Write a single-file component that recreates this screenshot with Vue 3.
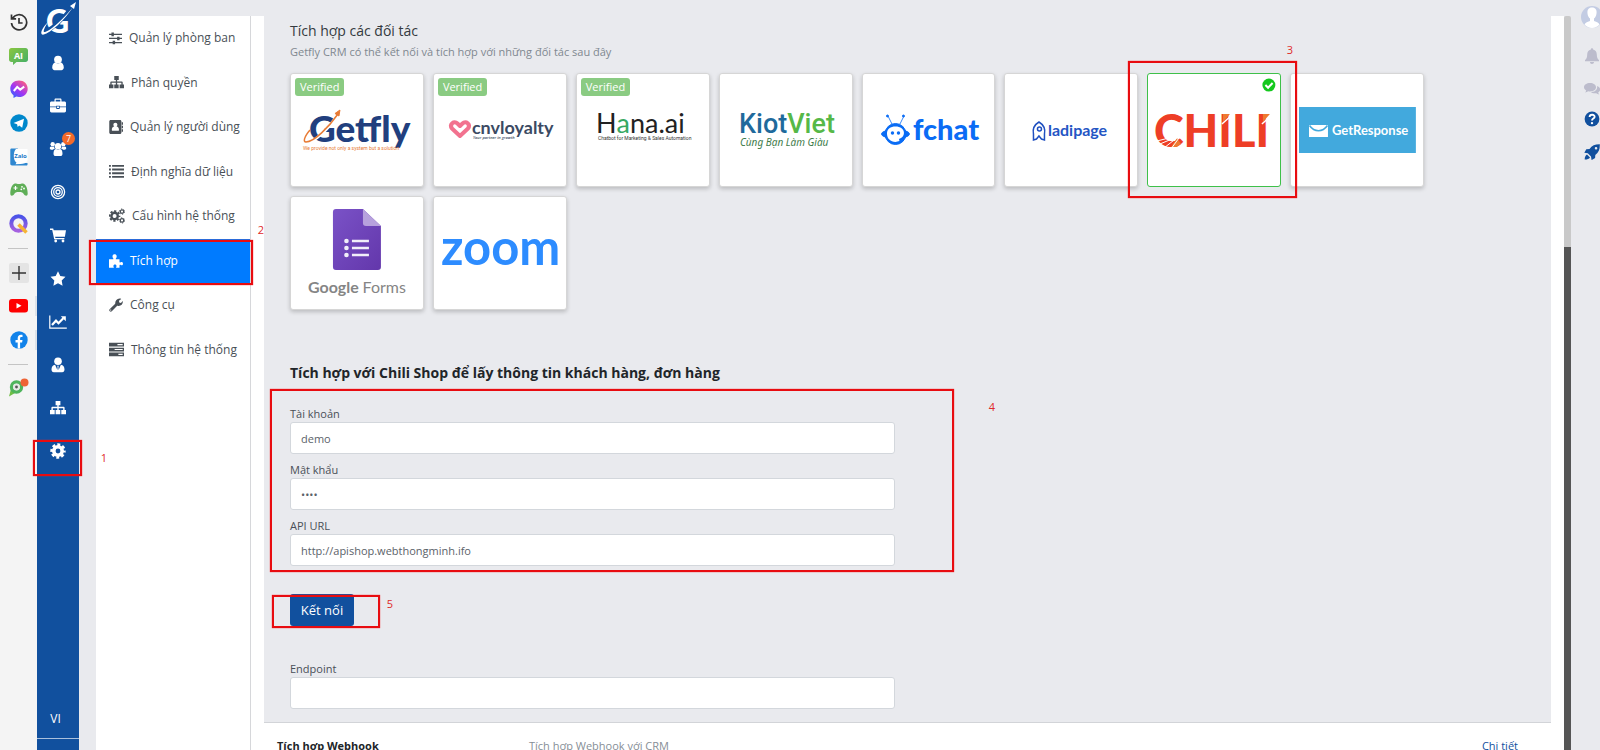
<script setup>
import { ref } from 'vue'

const icons = {
  user: '<circle cx="8" cy="4.6" r="3.9"/><path d="M2.2 12.6c0-3 1.4-5 3.4-5 .7.7 1.500 1 2.400 1s1.700-.3 2.400-1c2 0 3.400 2 3.400 5 0 1.500-1 2.600-2.400 2.600H4.600c-1.400 0-2.400-1.100-2.400-2.600z"/>',
  briefcase: '<path fill-rule="evenodd" d="M4.500 3.500V1.700C4.500 1 5 .5 5.700.5h4.600c.7 0 1.200.5 1.200 1.200v1.800h3c.8 0 1.500.6 1.500 1.400v3.600H9.800V7.800H6.200v.7H0V4.900c0-.8.7-1.400 1.500-1.400zm1.200 0h4.600V1.700H5.700zM0 9.300h6.200v1c0 .4.300.7.700.7h2.200c.4 0 .7-.3.700-.7v-1H16V13c0 .8-.7 1.400-1.500 1.400h-13C.7 14.400 0 13.800 0 13zm7-.7h2v1.500H7z"/>',
  group: '<circle cx="8" cy="5.200" r="3.200"/><circle cx="2.700" cy="3.200" r="2.200"/><circle cx="13.300" cy="3.200" r="2.200"/><path d="M3.500 12.700c0-2.600 1-4.700 2.700-4.700.5.500 1.100.7 1.800.7s1.300-.2 1.800-.7c1.700 0 2.700 2.100 2.700 4.700 0 1.500-.9 2.300-2.100 2.300H5.600c-1.200 0-2.100-.8-2.100-2.300zM1.300 5.600c.9.500 1.800.5 2.700 0 .1.900.4 1.600.9 2.200-.9 0-1.500.4-2 .9H1.300C.4 8.700-.2 8.200-.2 7.300c0-.8.5-1.600 1.500-1.700zM14.700 5.600c-.9.500-1.800.5-2.700 0-.1.900-.4 1.600-.9 2.200.9 0 1.500.4 2 .9h1.600c.9 0 1.500-.5 1.500-1.400 0-.8-.5-1.600-1.500-1.700z"/>',
  target: '<g fill="none" stroke="currentColor" stroke-width="1.300"><circle cx="8" cy="8" r="6.600"/><circle cx="8" cy="8" r="4.300"/><circle cx="8" cy="8" r="2"/></g>',
  cart: '<path d="M0 1.500h3.200l.5 1.700H16l-1.100 6.600H5.100l.3 1.200h9v1.300H4.200L2.200 2.900H0z"/><circle cx="5.700" cy="14" r="1.400"/><circle cx="13" cy="14" r="1.400"/>',
  star: '<path d="M8 .3l2.300 4.800 5.200.7-3.800 3.700.9 5.200L8 12.200l-4.600 2.500.9-5.200L.5 5.800l5.200-.7z"/>',
  chart: '<path d="M-.8 1.500H.4v12h16.400v1.200H-.8z"/><path d="M2 11l4-4.300 2.500 2.500 4.800-4.900" fill="none" stroke="currentColor" stroke-width="2.200"/><path d="M10.800 2.200h5v5z"/>',
  tie: '<circle cx="8" cy="4.200" r="3.800"/><path fill-rule="evenodd" d="M1.500 12.600c0-2.800 1.200-4.600 3.600-4.800L7.400 13l.2-3.300L7 8.700h2l-.6 1 .2 3.300 2.300-5.200c2.400.2 3.600 2 3.600 4.800 0 1.600-.8 2.600-2.300 2.600H3.800c-1.500 0-2.300-1-2.300-2.600z"/>',
  sitemap: '<path d="M5.600 1h4.800v4.200H8.700v1.600h5c.5 0 .9.400.9.900v2.300H16v4.200h-4.700V10h1.900V8.200H8.700V10h1.600v4.200H5.600V10h1.700V8.200H2.800V10h1.900v4.200H0V10h1.400V7.700c0-.5.400-.9.900-.9h5V5.200H5.600z"/>',
  gear: '<g fill="none" stroke="currentColor"><circle cx="8" cy="8" r="4.200" stroke-width="3.600"/><circle cx="8" cy="8" r="6.400" stroke-width="2.600" stroke-dasharray="2.900 2.126" stroke-dashoffset="1.450"/></g>',
  sliders: '<path d="M0 2.200h16v1.500H0zM0 7.200h16v1.500H0zM0 12.200h16v1.500H0z"/><path d="M3 .7h3v4.500H3zM10 5.700h3v4.500h-3zM4.500 10.700h3v4.500h-3z"/>',
  book: '<path fill-rule="evenodd" d="M2 0h10.500c1 0 1.700.7 1.700 1.700v12.600c0 1-.7 1.700-1.700 1.700H2C1 16 .3 15.300.3 14.300V1.700C.3.700 1 0 2 0zm5.300 3C5.900 3 5 4 5 5.300c0 .9.400 1.600 1 2.100-1.700.2-2.800 1.500-2.800 4 0 .6.4 1 1 1h6.200c.6 0 1-.4 1-1 0-2.500-1.100-3.800-2.800-4 .6-.5 1-1.200 1-2.100C9.600 4 8.700 3 7.300 3z"/><path d="M14.500 2.500H16v3h-1.500zM14.500 6.500H16v3h-1.500zM14.500 10.500H16v3h-1.500z"/>',
  list: '<path d="M0 1h2v2H0zM3.300 1H16v2H3.300zM0 4.900h2v2H0zM3.300 4.900H16v2H3.300zM0 8.800h2v2H0zM3.300 8.800H16v2H3.300zM0 12.700h2v2H0zM3.300 12.700H16v2H3.300z"/>',
  cogs: '<g fill="none" stroke="currentColor"><circle cx="5.600" cy="8" r="3.200" stroke-width="2.400"/><circle cx="5.600" cy="8" r="4.900" stroke-width="1.800" stroke-dasharray="2.200 1.648" stroke-dashoffset="1.100"/><circle cx="13" cy="3.600" r="1.700" stroke-width="1.200"/><circle cx="13" cy="3.600" r="2.600" stroke-width="1" stroke-dasharray="1.300 1.423"/><circle cx="13" cy="12.400" r="1.700" stroke-width="1.200"/><circle cx="13" cy="12.400" r="2.600" stroke-width="1" stroke-dasharray="1.300 1.423"/></g>',
  puzzle: '<path d="M0 6h4.700c.5 0 .5-.5.200-1C4.300 4.300 4 3.600 4 2.800 4 1.300 5 .3 6.400.3s2.400 1 2.400 2.500c0 .8-.3 1.500-.9 2.200-.3.500-.2 1 .3 1H12v3.200c0 .5.500.7 1 .4.400-.3.800-.5 1.300-.5 1 0 1.700.8 1.700 1.900s-.7 1.900-1.700 1.900c-.5 0-.9-.2-1.300-.5-.5-.3-1-.1-1 .4v2.900H8.600c-.5 0-.7-.4-.4-.8.3-.4.400-.8.400-1.200 0-1-.8-1.700-1.800-1.700s-1.800.7-1.800 1.700c0 .4.100.8.400 1.200.3.400.1.800-.4.800H0z"/>',
  wrench: '<path fill-rule="evenodd" d="M.7 12.800l6.400-6.300C6.800 3.300 8.900.5 12 .5c.8 0 1.500.2 2 .5l-2.600 2.100.3 2 1.900.5L15.800 3.500c.5 2.900-1.900 5.800-5.200 5.500-.4 0-.8-.1-1.200-.2l-6.200 6.400c-.7.600-1.600.6-2.300 0-.8-.7-.8-1.700-.2-2.400zm1.500.3a.7.7 0 1 0 .1 1.300.7.7 0 0 0-.1-1.300z"/>',
  server: '<path fill-rule="evenodd" d="M0 .8h16v4H0zm9 1.400v1.200h5.600V2.200zM0 6h16v4H0zm6 1.400v1.200h8.600V7.400zM0 11.200h16v4H0zm10 1.400v1.200h4.600v-1.200z"/>',
  bell: '<path d="M8 .3c.7 0 1.100.5 1.100 1.200 2.500.5 3.700 2.400 3.700 5 0 3 .8 4.600 2.200 5.500v1.300H1V12c1.400-.9 2.200-2.500 2.200-5.500 0-2.600 1.200-4.500 3.700-5C6.900.8 7.300.3 8 .3zM6 14h4c0 1.200-.8 2-2 2s-2-.8-2-2z"/>',
  comments: '<path d="M6 2c3.400 0 6 1.800 6 4.200s-2.600 4.200-6 4.200c-.6 0-1.200-.1-1.800-.2-.9.700-1.900 1.100-3.100 1.200.6-.6 1-1.200 1.100-2C.8 8.600 0 7.500 0 6.200 0 3.800 2.600 2 6 2z"/><path d="M13.100 5c1.800.6 3.100 1.900 3.100 3.500 0 1.200-.8 2.300-2 3 .1.700.5 1.300 1.100 1.900-1.200-.1-2.200-.5-3.100-1.200-2 .4-4.200 0-5.500-1.100 3.900 0 7-2.200 6.400-6.100z"/>',
  rocket: '<path fill-rule="evenodd" d="M15.800.3c.2 4.600-.9 8.100-4.500 10.600l-.2 3.200-3.500 2L7 12.500 3.800 9.300.3 8.700l2-3.500 3.200-.3C8 1.500 11.200.2 15.800.3zM12 3a1.300 1.300 0 1 0 .1 2.600A1.300 1.300 0 0 0 12 3zM3 10.500l3 3C5 15 3 15.700.7 15.600.6 13.300 1.400 11.500 3 10.500z"/>'
}

const modules = ['user', 'briefcase', 'group', 'target', 'cart', 'star', 'chart', 'tie', 'sitemap', 'gear']
const menu = [
  { icon: 'sliders', size: 13, text: 'Quản lý phòng ban' },
  { icon: 'sitemap', size: 15, text: 'Phân quyền' },
  { icon: 'book', size: 14, text: 'Quản lý người dùng' },
  { icon: 'list', size: 15, text: 'Định nghĩa dữ liệu' },
  { icon: 'cogs', size: 16, text: 'Cấu hình hệ thống' },
  { icon: 'puzzle', size: 14, text: 'Tích hợp', active: true },
  { icon: 'wrench', size: 14, text: 'Công cụ' },
  { icon: 'server', size: 15, text: 'Thông tin hệ thống' }
]
const account = ref('demo')
const password = ref('demo')
const apiUrl = ref('http://apishop.webthongminh.ifo')
const endpoint = ref('')
</script>

<template>
  <div class="shell">
    <nav class="rail" aria-label="Apps">
      <div class="apps">
        <a href="#" aria-label="History"><svg width="18" height="18" viewBox="0 0 18 18" fill="none" stroke="#333" stroke-width="1.700"><path d="M2.500 5.500A7.600 7.600 0 1 1 1.500 10M1.500 1.500v4.300h4.600M9 5v5h3.600"/></svg></a>
        <a href="#" aria-label="AI"><svg width="19" height="19" viewBox="0 -2 19 19"><defs><linearGradient id="ai" x2="1" y2="1"><stop stop-color="#8cc63f"/><stop offset="1" stop-color="#3fae6b"/></linearGradient></defs><path d="M2.500 0h14C18 0 19 1 19 2.500v9c0 1.500-1 2.500-2.500 2.500H7.500L4 17v-3H2.500C1 14 0 13 0 11.500v-9C0 1 1 0 2.500 0z" fill="url(#ai)"/><text x="9.500" y="10.500" text-anchor="middle" font-size="9" font-weight="700" fill="#fff">AI</text></svg></a>
        <a href="#" aria-label="Messenger"><svg width="18" height="18" viewBox="0 0 18 18"><defs><linearGradient id="ms" x1="0" y1="1" x2=".8" y2="0"><stop stop-color="#1a6dff"/><stop offset=".5" stop-color="#a035f5"/><stop offset="1" stop-color="#ff5f7d"/></linearGradient></defs><path d="M9 .5c5 0 8.700 3.500 8.700 8.200S14 17 9 17c-1 0-1.900-.1-2.700-.4L3.500 18v-2.700C1.500 13.700.3 11.500.3 8.700.3 4 4 .5 9 .5z" fill="url(#ms)"/><path d="M3.800 11l3.400-4 3 2.600 4-3" fill="none" stroke="#fff" stroke-width="2"/></svg></a>
        <a href="#" aria-label="Telegram"><svg width="18" height="18" viewBox="0 0 18 18"><circle cx="9" cy="9" r="8.700" fill="#0088cc"/><path d="M3.500 9L14 4.700l-1.800 9-3-2.200-1.500 1.600-.6-2.800z" fill="#fff"/></svg></a>
        <a href="#" aria-label="Zalo"><svg width="18" height="18" viewBox="0 0 18 18"><path d="M1.500.5H8L5 4v8l3 3h9.500v1.500c0 .6-.4 1-1 1H2c-1 0-1.700-.7-1.700-1.700V2C.3 1 .7.500 1.500.5z" fill="#2f87d0"/><path d="M6 1h11.500v11.500c-1 2.500-4 3.500-7 3.500l-5 .2 1-1.800C3 12.500 3 4 6 1z" fill="#fff"/><text x="10.500" y="10" text-anchor="middle" font-size="6" font-weight="700" fill="#1d78c8">Zalo</text></svg></a>
        <a href="#" aria-label="Games"><svg width="18" height="14" viewBox="0 0 18 14"><path d="M4 1c1.500-1.200 2.500 0 5 0s3.500-1.200 5 0c2.500 1 3.700 6 3.700 9.500 0 3-2.700 2.500-4 .5C12.800 9.500 12 9 9 9s-3.800.5-4.700 2C3 13 .3 13.500.3 10.500.3 7 1.500 2 4 1z" fill="#5fae57"/><path d="M5.500 3v4M3.500 5h4" stroke="#fff" stroke-width="1.200"/><circle cx="12" cy="3.800" r=".9" fill="#fff"/><circle cx="14" cy="5.500" r=".9" fill="#fff"/><circle cx="11.300" cy="6.300" r=".9" fill="#fff"/></svg></a>
        <a href="#" aria-label="Search"><svg width="20" height="20" viewBox="0 0 20 20" fill="none"><defs><linearGradient id="qq" x1="1" y2="1"><stop stop-color="#4a53e8"/><stop offset="1" stop-color="#a561e0"/></linearGradient></defs><circle cx="9.500" cy="9.500" r="7.200" stroke="url(#qq)" stroke-width="4"/><path d="M9.500 10.500l8 8" stroke="#f5b335" stroke-width="3.600"/></svg></a>
      </div>
      <hr>
      <div class="apps pinned">
        <button class="add" type="button" aria-label="Add"><svg width="14" height="14" viewBox="0 0 14 14" stroke="#333" stroke-width="1.400"><path d="M7 0v14M0 7h14"/></svg></button>
        <a href="#" class="tab" aria-label="YouTube"><svg width="19" height="14" viewBox="0 0 19 14"><rect width="19" height="13.500" rx="3" fill="#fe0000"/><path d="M7.500 4v5.500l5-2.700z" fill="#fff"/></svg></a>
        <a href="#" class="tab" aria-label="Facebook"><svg width="18" height="18" viewBox="0 0 18 18"><circle cx="9" cy="9" r="8.700" fill="#1283ea"/><path d="M7.700 17.600v-6H5.500V9.100h2.200V7.200C7.700 5 9 3.800 11 3.800c.8 0 1.500.1 1.500.1V6h-1.100c-1 0-1.300.6-1.300 1.300v1.800h2.400l-.4 2.500h-2v6z" fill="#fff"/></svg></a>
      </div>
      <hr>
      <a href="#" class="last" aria-label="Lead"><svg width="20" height="19" viewBox="0 0 20 19"><path d="M0 18.500L2 11l4 4z" fill="#6fbe45"/><circle cx="7.500" cy="9" r="5" fill="none" stroke="#4eb45c" stroke-width="3.400"/><circle cx="7.500" cy="9" r="3.400" fill="#e5e9e5"/><circle cx="7.500" cy="9" r="1.400" fill="#555"/><circle cx="15.500" cy="4.500" r="4" fill="#ee6334"/></svg></a>
    </nav>

    <nav class="bar" aria-label="Modules">
      <a href="#" class="brand" aria-label="Home"><svg width="42" height="40" viewBox="0 0 42 40"><text x="9" y="33" class="lato" font-size="32" font-weight="900" fill="#fff">G</text><path d="M35 7C27 18 16 28 8 32" fill="none" stroke="#11509e" stroke-width="4"/><path d="M11 22c-6 6-8 11-6 12.500C9 36 25 24 36 7 24 22 10 33 7 32c-1-1 1-5 4-10z" fill="#fff"/><path d="M39 2l-6 4 4 3z" fill="#fff"/></svg></a>
      <div class="modules">
        <a v-for="m in modules" :key="m" href="#" :aria-label="m">
          <svg width="16" height="16" viewBox="0 0 16 16" fill="currentColor" overflow="visible" v-html="icons[m]"></svg>
          <span v-if="m === 'group'" class="count">7</span>
          <span v-if="m === 'gear'" class="mark mark-gear"><b>1</b></span>
        </a>
      </div>
      <button type="button" class="lang">VI</button>
    </nav>

    <nav class="side" aria-label="Settings">
      <div class="menu">
        <a v-for="i in menu" :key="i.text" href="#" :class="{ active: i.active }">
          <svg :width="i.size" :height="i.size" viewBox="0 0 16 16" fill="currentColor" v-html="icons[i.icon]"></svg>
          <span>{{ i.text }}</span>
          <span v-if="i.active" class="mark mark-menu"><b>2</b></span>
        </a>
      </div>
    </nav>

    <main>
      <section class="panel">
        <h1>Tích hợp các đối tác</h1>
        <p class="sub">Getfly CRM có thể kết nối và tích hợp với những đối tác sau đây</p>
        <div class="cards">
          <a href="#" class="card"><span class="tag">Verified</span>
            <svg viewBox="1 1 132 112"><text x="19" y="69" class="lato" font-size="37" font-weight="900" fill="#213f7e">Getfly</text><path d="M18 60c-5 6-5 10-2 10 8 0 22-14 32-28" fill="none" stroke="#fff" stroke-width="3"/><path d="M20 57c-6 7-7 12-4 12C24 69 39 54 48 41" fill="none" stroke="#e87c36" stroke-width="1.500"/><path d="M50 37l-5 3.500 4 2.500z" fill="#e87c36" stroke="#e87c36"/><text x="13" y="77" class="roboto" font-size="5" fill="#e87c36">We provide not only a system but a solution</text></svg>
          </a>
          <a href="#" class="card"><span class="tag">Verified</span>
            <svg viewBox="1 1 132 112"><path d="M27 63l-8-7.500c-3-4 2-8.500 5.500-5L27 53l2.500-2.500c3.500-3.500 8.500 1 5.500 5z" fill="none" stroke="#f2728f" stroke-width="4" stroke-linejoin="round"/><text x="39" y="61" class="lato" font-size="18" font-weight="700" fill="#3b4a63">cnvloyalty</text><text x="40" y="66" class="open" font-size="4" font-style="italic" font-weight="600" fill="#3b4a63">Your partner in growth</text></svg>
          </a>
          <a href="#" class="card"><span class="tag">Verified</span>
            <svg viewBox="1 1 132 112"><text x="20" y="60" class="lato" font-size="27" fill="#222">H<tspan fill="#37a862">a</tspan>na.ai</text><text x="22" y="67" class="roboto" font-size="5" fill="#333">Chatbot for Marketing &amp; Sales Automation</text></svg>
          </a>
          <a href="#" class="card">
            <svg viewBox="1 1 132 112"><text x="20" y="60" class="roboto" font-size="27" font-weight="500" fill="#1f6a9c">Kiot<tspan fill="#56b848">Viet</tspan></text><text x="21" y="73" class="noto" font-size="10" font-style="italic" fill="#3e7b4a">Cùng Bạn Làm Giàu</text></svg>
          </a>
          <a href="#" class="card">
            <svg viewBox="1 1 132 112"><g stroke="#0a6cf5" fill="#0a6cf5"><path d="M30 51l-4-8M38 51l4-8" stroke-width=".8"/><circle cx="25.500" cy="43" r="1"/><circle cx="41.500" cy="43" r="1"/><ellipse cx="33.500" cy="61" rx="14" ry="4.500"/><circle cx="33.500" cy="61" r="10.500"/></g><path d="M33.500 53.500c-5 0-8.500 2.500-8.500 7 0 5 3.500 8.500 8.500 8.500l4-1-.5-2c3-1 5-3 5-6 0-4-3.500-6.500-8.500-6.500z" fill="#fff"/><circle cx="30.500" cy="60" r="1.700" fill="#0a6cf5"/><circle cx="36.500" cy="60" r="1.700" fill="#0a6cf5"/><text x="51" y="67" class="lato" font-size="29" font-weight="900" fill="#0a6cf5">fchat</text></svg>
          </a>
          <a href="#" class="card">
            <svg viewBox="1 1 132 112"><g fill="none" stroke="#1f4fc0" stroke-width="1.500"><path d="M35 49c-5 3-6.500 7-5.500 12v6l3-1 2.500-3 2.500 3 3 1v-6c1-5-.5-9-5.500-12z"/><circle cx="35.500" cy="56" r="2"/></g><text x="44" y="63" class="lato" font-size="16" font-weight="700" fill="#2455c4">ladipage</text></svg>
          </a>
          <a href="#" class="card chosen">
            <svg viewBox="1 1 132 112"><text x="7" y="74" class="lato" font-size="45" font-weight="900" fill="#ee3e26">CHILI</text><path d="M24 74l6-9 4 6-4 3z" fill="#ee7a30"/><path d="M10 68l20-5M13 71l19-8M17 75l14-11M24 76l8-11" stroke="#fff" stroke-width="1"/><path d="M76 49v-8h7zM116 49v-8h7z" fill="#ee7a30"/><path d="M75 51l10-9M115 51l10-9" stroke="#fff" stroke-width="1.500"/><circle cx="122" cy="12" r="6.500" fill="#14c81e"/><path d="M118.500 12l2.700 2.700 4.500-4.700" fill="none" stroke="#fff" stroke-width="2"/></svg>
            <span class="mark mark-card"><b>3</b></span>
          </a>
          <a href="#" class="card">
            <svg viewBox="1 1 132 112"><path d="M9 34h117v46H9z" fill="#42a9dd"/><path d="M19 52h19v12H19z" fill="#fff"/><path d="M19.500 52.500c5 7 13 7 18 0" fill="none" stroke="#42a9dd" stroke-width="1.600"/><text x="42" y="62" class="lato" font-size="13" font-weight="700" fill="#fff">GetResponse</text></svg>
          </a>
          <a href="#" class="card">
            <svg viewBox="1 1 132 112"><defs><linearGradient id="gf" x2="1" y2="1"><stop stop-color="#7a52c7"/><stop offset="1" stop-color="#6337ab"/></linearGradient></defs><path d="M46 13h27l18 17v41c0 2-1 3-3 3H46c-2 0-3-1-3-3V16c0-2 1-3 3-3z" fill="url(#gf)"/><path d="M73 13l18 17H76c-2 0-3-1-3-3z" fill="#b7a1dd"/><path d="M62 45h17M62 52h17M62 59h17" stroke="#f1eef9" stroke-width="2.600"/><g fill="#f1eef9"><circle cx="56.500" cy="45" r="2.300"/><circle cx="56.500" cy="52" r="2.300"/><circle cx="56.500" cy="59" r="2.300"/></g><text x="18" y="97" class="lato" font-size="16" font-weight="700" fill="#858585">Google <tspan font-weight="400">Forms</tspan></text></svg>
          </a>
          <a href="#" class="card">
            <svg viewBox="1 1 132 112"><text x="8" y="69" class="lato" font-size="49" font-weight="700" fill="#2d8cff">zoom</text></svg>
          </a>
        </div>

        <h2>Tích hợp với Chili Shop để lấy thông tin khách hàng, đơn hàng</h2>
        <form @submit.prevent>
          <div class="fields">
            <label for="account">Tài khoản</label>
            <input id="account" v-model="account" type="text">
            <label for="password">Mật khẩu</label>
            <input id="password" v-model="password" type="password">
            <label for="api">API URL</label>
            <input id="api" v-model="apiUrl" type="text">
            <span class="mark mark-form"><b>4</b></span>
          </div>
          <div class="action">
            <button type="submit">Kết nối</button>
            <span class="mark mark-action"><b>5</b></span>
          </div>
          <div class="fields">
            <label for="endpoint">Endpoint</label>
            <input id="endpoint" v-model="endpoint" type="text">
          </div>
        </form>
      </section>
      <section class="webhook">
        <strong>Tích hợp Webhook</strong>
        <span>Tích hợp Webhook với CRM</span>
        <a href="#">Chi tiết</a>
      </section>
    </main>
    <div class="track"><div class="thumb"></div></div>

    <aside>
      <a href="#" class="avatar" aria-label="Profile"><svg width="22" height="22" viewBox="0 0 22 22"><circle cx="11" cy="11" r="11" fill="#c3cce3"/><path d="M11 1.500c3.500 0 5 2.500 4.500 6-.3 2.500-1.200 4-2.500 5v2.500c3 1 5 1.800 5.500 3.500-2 2.300-4.500 3.500-7.500 3.500s-5.500-1.200-7.500-3.500C4 16.800 6 16 9 15v-2.500c-1.300-1-2.200-2.500-2.500-5-.5-3.500 1-6 4.500-6z" fill="#fff"/></svg></a>
      <a href="#" class="muted" aria-label="Notifications"><svg width="16" height="16" viewBox="0 0 16 16" fill="currentColor" v-html="icons.bell"></svg></a>
      <a href="#" class="muted" aria-label="Messages"><svg width="16" height="16" viewBox="0 0 16 16" fill="currentColor" v-html="icons.comments"></svg></a>
      <a href="#" aria-label="Help"><svg width="16" height="16" viewBox="0 0 16 16"><circle cx="8" cy="8" r="7.400" fill="#11509e"/><path d="M5.600 6c.2-3.200 5.300-2.800 5 0C10.400 7.600 8 7.600 8 9.500" fill="none" stroke="#fff" stroke-width="1.900"/><circle cx="8" cy="12.100" r="1.200" fill="#fff"/></svg></a>
      <a href="#" class="rocket" aria-label="Updates"><svg width="16" height="16" viewBox="0 0 16 16" fill="currentColor" v-html="icons.rocket"></svg></a>
    </aside>
  </div>
</template>

<style>
body { margin: 0; }
</style>

<style scoped>
* { box-sizing: border-box; }
.shell {
  display: flex;
  height: 100vh;
  overflow: hidden;
  background: #e9eaee;
  color: #495057;
  font: 11px/16px "Open Sans", "Noto Sans", sans-serif;
}
a { color: inherit; text-decoration: none; }
svg { display: block; flex: none; }
.lato { font-family: Lato, sans-serif; }
.noto { font-family: "Noto Sans", sans-serif; }
.open { font-family: "Open Sans", sans-serif; }
.roboto { font-family: Roboto, sans-serif; }

.rail { flex: 0 0 37px; min-width: 0; padding-top: 5px; background: #f4f4f4; }
.apps { display: grid; grid-auto-rows: 1fr; height: 236px; }
.apps > * { display: grid; place-items: center; }
.rail hr { width: 20px; height: 1px; margin: 7px 8px; border: 0; background: #c4c4c4; }
.pinned { height: 101px; }
.add { width: 20px; height: 20px; margin: auto; padding: 0; border: 0; border-radius: 2px; background: #e4e4e4; }
.tab { position: relative; }
.tab::after { content: ""; position: absolute; right: 0; width: 2px; height: 20px; background: #dde2e8; }
.last { display: flex; margin: 13px 0 0 9px; }

.bar { display: flex; flex-direction: column; flex: 0 0 42px; background: #11509e; color: #fff; }
.brand { height: 41px; }
.modules { display: grid; grid-auto-rows: 1fr; height: 432px; }
.modules a { position: relative; display: grid; place-items: center; }
.count {
  position: absolute; top: 5px; right: 4px; width: 13px; height: 13px;
  border-radius: 7px; background: #f26a2b; font-size: 9px; line-height: 13px; text-align: center;
}
.lang {
  height: 40px; margin: auto 0 11px; padding: 0; border: 0; border-bottom: 1px solid #a9c0dc;
  padding-right: 5px; background: none; color: #fff; font: 12px/40px "Open Sans", sans-serif;
}

.side { flex: 0 0 155px; margin: 16px 0 0 17px; border-right: 1px solid #d6d7da; background: #fff; }
.menu { display: grid; grid-auto-rows: 1fr; height: 356px; }
.menu a { position: relative; display: flex; align-items: center; gap: 7px; padding-left: 13px; font-size: 12px; white-space: nowrap; }
.menu .active { background: #007bff; color: #fff; }

main { flex: 1; min-width: 0; margin-top: 16px; padding: 0 13px; background: #fff; }
.panel { padding: 4px 26px 13px; border-bottom: 1px solid #d2d4d8; background: #e9eaee; }
h1 { margin: 0; color: #343a40; font-size: 14px; font-weight: 400; line-height: 22px; }
.sub { margin: 0 0 11px; color: #808890; line-height: 20px; }
.cards { display: grid; grid-template-columns: repeat(8, 1fr); gap: 9px; max-width: 1134px; }
.card { position: relative; height: 114px; border: 1px solid #d6d6d6; border-radius: 3px; background: #fff; box-shadow: 0 2px 4px #0003; }
.card > svg { width: 100%; height: 100%; }
.chosen { border-color: #3fc04a; box-shadow: none; }
.tag { position: absolute; top: 4px; left: 4px; padding: 0 5px; border-radius: 3px; background: #8acb82; color: #fff; line-height: 18px; }
h2 { margin: 51px 0 21px; color: #212529; font-size: 14px; font-weight: 700; line-height: 24px; }
.fields { position: relative; max-width: 605px; }
.fields label { display: block; }
.fields input {
  display: block; width: 100%; height: 32px; padding: 0 10px; border: 1px solid #d3d7dc;
  border-radius: 3px; background: #fff; color: #5b6269; font: inherit;
}
.fields input + label { margin-top: 8px; }
.action { position: relative; width: 64px; margin: 28px 0 35px; }
.action button { width: 100%; height: 32px; padding: 0; border: 0; border-radius: 3px; background: #11509e; color: #fff; font: 13px/32px "Open Sans", sans-serif; }
.webhook { display: grid; grid-template-columns: 252px 1fr auto; padding: 15px 33px 15px 13px; color: #868e96; }
.webhook strong { color: #212529; }
.webhook a { color: #11509e; }

.track { flex: 0 0 7px; margin-top: 16px; border-radius: 2px; background: #c9c9c9; }
.thumb { height: 100%; margin-top: 231px; background: #555; }
aside { display: flex; flex-direction: column; flex: 0 0 29px; align-items: flex-start; gap: 17px; padding: 6px 0 0 10px; overflow: hidden; color: #11509e; }
aside a:not(.avatar) { margin-left: 3px; }
aside .avatar { margin-bottom: 3px; }
.muted { color: #bcbccc; }
.muted + .muted + a { margin-top: -3px; }

.mark { position: absolute; z-index: 2; border: 2px solid #e80c10; box-shadow: 0 0 1px #ff2020; pointer-events: none; }
.mark b { position: absolute; color: #e02a2a; font-size: 11px; font-weight: 400; line-height: 14px; }
.mark-gear { inset: 10px -3px -3px -4px; }
.mark-gear b { top: 9px; right: -27px; }
.mark-menu { inset: 1px -3px -2px -7px; }
.mark-menu b { top: -19px; right: -13px; }
.mark-card { inset: -13px -17px -12px -20px; }
.mark-card b { top: -20px; right: 2px; }
.mark-form { inset: -17px -59px -6px -20px; }
.mark-form b { top: 9px; right: -43px; }
.mark-action { inset: 1px -26px -2px -18px; }
.mark-action b { top: 0; right: -15px; }
</style>
